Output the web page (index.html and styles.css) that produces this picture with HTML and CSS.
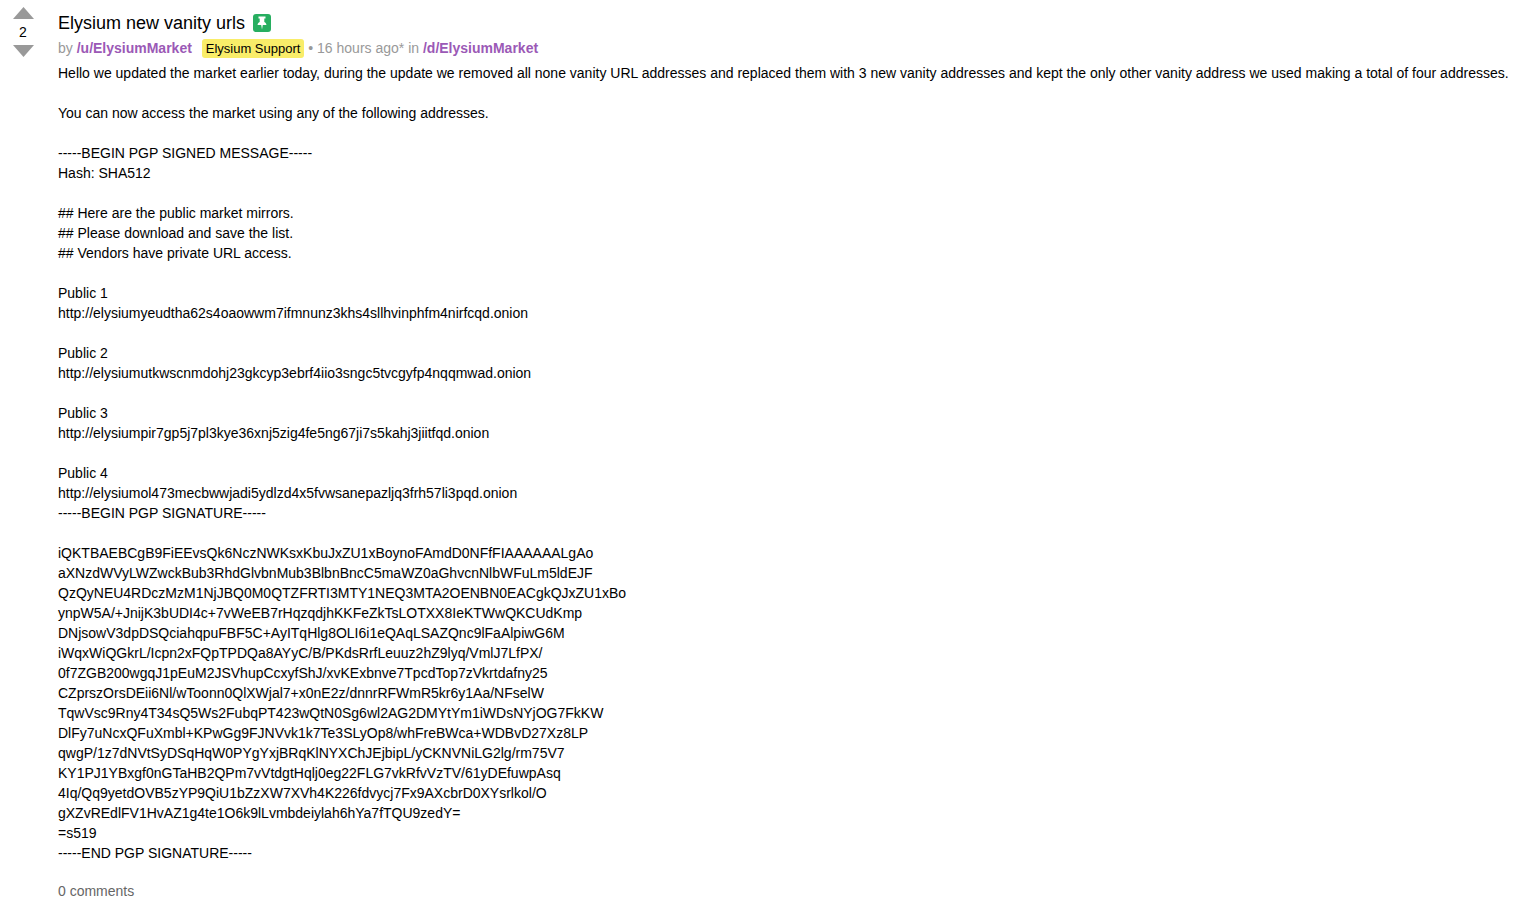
FILE: index.html
```html
<!DOCTYPE html>
<html lang="en">
  <head>
    <meta charset="UTF-8" />
    <meta name="viewport" content="width=device-width, initial-scale=1.0" />
    <title>Elysium new vanity urls</title>
    <link rel="stylesheet" href="styles.css">
  </head>
  <body>
    <main class="post">
      <!-- Voting -->
      <div class="votes">
        <button type="button" class="vote" aria-label="Upvote">
          <svg width="21" height="12" viewBox="0 0 21 12"><path d="M10.5 0 21 12H0z" /></svg>
        </button>
        <span class="score">2</span>
        <button type="button" class="vote" aria-label="Downvote">
          <svg width="21" height="12" viewBox="0 0 21 12"><path d="M0 0h21L10.5 12z" /></svg>
        </button>
      </div>

      <article class="content">
        <header>
          <h1 class="title">
            Elysium new vanity urls
            <span class="pin">
              <svg width="10" height="14" viewBox="0 0 10 14">
                <path d="M1.500 .5h7v2H7.300v3.500C8.600 6.600 9.400 7.500 9.400 9H5.800L5 13.500 4.200 9H.6C.6 7.500 1.400 6.600 2.700 6V2.500H1.500z" />
              </svg>
            </span>
          </h1>
          <p class="meta">
            by <a class="user" href="#">/u/ElysiumMarket</a>
            <span class="flair">Elysium Support</span>
            • 16 hours ago* in <a href="#">/d/ElysiumMarket</a>
          </p>
        </header>

        <div class="text">Hello we updated the market earlier today, during the update we removed all none vanity URL addresses and replaced them with 3 new vanity addresses and kept the only other vanity address we used making a total of four addresses.

You can now access the market using any of the following addresses.

-----BEGIN PGP SIGNED MESSAGE-----
Hash: SHA512

## Here are the public market mirrors.
## Please download and save the list.
## Vendors have private URL access.

Public 1
http://elysiumyeudtha62s4oaowwm7ifmnunz3khs4sllhvinphfm4nirfcqd.onion

Public 2
http://elysiumutkwscnmdohj23gkcyp3ebrf4iio3sngc5tvcgyfp4nqqmwad.onion

Public 3
http://elysiumpir7gp5j7pl3kye36xnj5zig4fe5ng67ji7s5kahj3jiitfqd.onion

Public 4
http://elysiumol473mecbwwjadi5ydlzd4x5fvwsanepazljq3frh57li3pqd.onion
-----BEGIN PGP SIGNATURE-----

iQKTBAEBCgB9FiEEvsQk6NczNWKsxKbuJxZU1xBoynoFAmdD0NFfFIAAAAAALgAo
aXNzdWVyLWZwckBub3RhdGlvbnMub3BlbnBncC5maWZ0aGhvcnNlbWFuLm5ldEJF
QzQyNEU4RDczMzM1NjJBQ0M0QTZFRTI3MTY1NEQ3MTA2OENBN0EACgkQJxZU1xBo
ynpW5A/+JnijK3bUDI4c+7vWeEB7rHqzqdjhKKFeZkTsLOTXX8IeKTWwQKCUdKmp
DNjsowV3dpDSQciahqpuFBF5C+AyITqHlg8OLI6i1eQAqLSAZQnc9lFaAlpiwG6M
iWqxWiQGkrL/Icpn2xFQpTPDQa8AYyC/B/PKdsRrfLeuuz2hZ9lyq/VmlJ7LfPX/
0f7ZGB200wgqJ1pEuM2JSVhupCcxyfShJ/xvKExbnve7TpcdTop7zVkrtdafny25
CZprszOrsDEii6Nl/wToonn0QlXWjal7+x0nE2z/dnnrRFWmR5kr6y1Aa/NFselW
TqwVsc9Rny4T34sQ5Ws2FubqPT423wQtN0Sg6wl2AG2DMYtYm1iWDsNYjOG7FkKW
DlFy7uNcxQFuXmbl+KPwGg9FJNVvk1k7Te3SLyOp8/whFreBWca+WDBvD27Xz8LP
qwgP/1z7dNVtSyDSqHqW0PYgYxjBRqKlNYXChJEjbipL/yCKNVNiLG2lg/rm75V7
KY1PJ1YBxgf0nGTaHB2QPm7vVtdgtHqlj0eg22FLG7vkRfvVzTV/61yDEfuwpAsq
4Iq/Qq9yetdOVB5zYP9QiU1bZzXW7XVh4K226fdvycj7Fx9AXcbrD0XYsrlkol/O
gXZvREdlFV1HvAZ1g4te1O6k9lLvmbdeiylah6hYa7fTQU9zedY=
=s519
-----END PGP SIGNATURE-----</div>

        <footer class="comments"><a href="#">0 comments</a></footer>
      </article>
    </main>
  </body>
</html>
```
FILE: styles.css
```css
* {
  box-sizing: border-box;
}

body {
  margin: 0;
  background-color: #fff;
  color: #000;
  font-family: "Liberation Sans", Arial, sans-serif;
  font-size: 14px;
  line-height: 20px;
}

a {
  color: #9b59b6;
  font-weight: bold;
  text-decoration: none;
}

.post {
  display: flex;
  gap: 24px;
  padding: 7px 4px 7px 12px;
}

/* Voting column */
.votes {
  display: flex;
  flex-direction: column;
  align-items: center;
  flex: 0 0 22px;
}

.vote {
  padding: 0;
  border: none;
  background: none;
  cursor: pointer;
}

.vote svg {
  display: block;
  fill: #999;
}

.score {
  padding: 3px 0;
}

.content {
  flex: 1;
  min-width: 0;
}

.title {
  display: flex;
  align-items: center;
  gap: 8px;
  margin: 4px 0 0;
  font-size: 18px;
  font-weight: normal;
  line-height: 24px;
}

.pin {
  display: flex;
  align-items: center;
  justify-content: center;
  width: 18px;
  height: 18px;
  border-radius: 3px;
  background-color: #27ae60;
}

.pin svg {
  fill: #fff;
}

.meta {
  margin: 3px 0 4px;
  color: #999;
}

.user {
  margin-right: 6px;
}

.flair {
  padding: 2px 4px;
  border-radius: 3px;
  background-color: #f9ed69;
  color: #000;
  font-size: 13px;
}

.text {
  white-space: pre-wrap;
}

.comments {
  margin-top: 18px;
}

.comments a {
  color: #666;
  font-weight: normal;
}
```
